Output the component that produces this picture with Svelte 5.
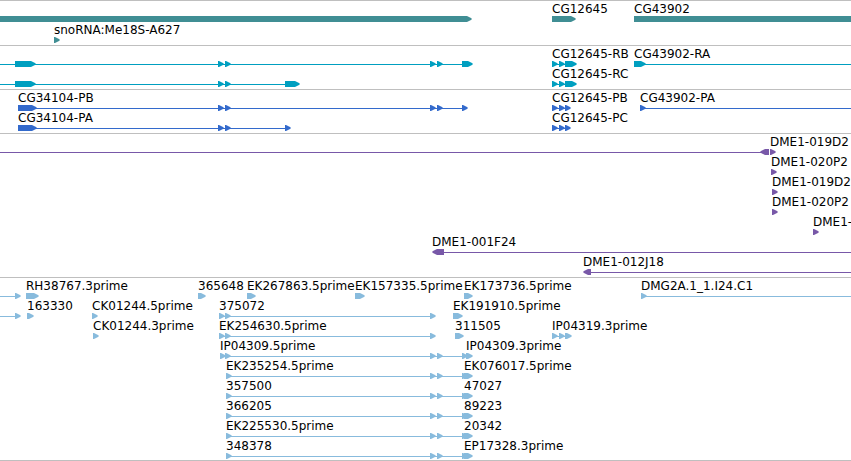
<script>
    // reads that run on past the right edge
    const END = 4000

    // spans: [start, end], dir is only set for the reverse strand
    const tracks = [
        {
            name: 'genes',
            rows: [
                [
                    { spans: [[-10, 472]] },
                    { label: 'CG12645', spans: [[552, 576]] },
                    { label: 'CG43902', spans: [[634, END]] },
                ],
                [
                    { label: 'snoRNA:Me18S-A627', spans: [[54, 60]] },
                ],
            ]
        },
        {
            name: 'transcripts',
            rows: [
                [
                    { line: [0, 470], spans: [[15, 36], [218, 224], [225, 231], [430, 436], [437, 443], [462, 473]] },
                    { label: 'CG12645-RB', line: [552, 570], spans: [[552, 558], [559, 565], [565, 577]] },
                    { label: 'CG43902-RA', line: [634, END], spans: [[634, 646]] },
                ],
                [
                    { line: [0, 298], spans: [[15, 36], [218, 224], [225, 231], [285, 300]] },
                    { label: 'CG12645-RC', line: [552, 570], spans: [[552, 558], [559, 565], [565, 577]] },
                ],
            ]
        },
        {
            name: 'proteins',
            rows: [
                [
                    { label: 'CG34104-PB', line: [18, 465], spans: [[18, 37], [218, 224], [225, 231], [430, 436], [437, 443], [462, 468]] },
                    { label: 'CG12645-PB', line: [552, 568], spans: [[552, 558], [559, 565], [565, 571]] },
                    { label: 'CG43902-PA', line: [640, END], spans: [[640, 646]] },
                ],
                [
                    { label: 'CG34104-PA', line: [18, 288], spans: [[18, 37], [218, 224], [225, 231], [285, 291]] },
                    { label: 'CG12645-PC', line: [552, 568], spans: [[552, 558], [559, 565], [565, 571]] },
                ],
            ]
        },
        {
            name: 'clones',
            rows: [
                [
                    { line: [0, 765], spans: [[760, 769]], dir: 'rev' },
                    { label: 'DME1-019D2', spans: [[770, 776]] },
                ],
                [{ label: 'DME1-020P2', spans: [[771, 777]] }],
                [{ label: 'DME1-019D2', spans: [[772, 778]] }],
                [{ label: 'DME1-020P2', spans: [[772, 778]] }],
                [{ label: 'DME1-', spans: [[813, 819]] }],
                [{ label: 'DME1-001F24', line: [436, END], spans: [[432, 444]], dir: 'rev' }],
                [{ label: 'DME1-012J18', line: [586, END], spans: [[583, 591]], dir: 'rev' }],
            ]
        },
        {
            name: 'ests',
            rows: [
                [
                    { line: [0, 18], spans: [[15, 21]] },
                    { label: 'RH38767.3prime', spans: [[26, 39]] },
                    { label: '365648', spans: [[198, 206]] },
                    { label: 'EK267863.5prime', spans: [[247, 256]] },
                    { label: 'EK157335.5prime', spans: [[355, 365]] },
                    { label: 'EK173736.5prime', spans: [[464, 473]] },
                    { label: 'DMG2A.1_1.I24.C1', line: [641, END], spans: [[641, 647]] },
                ],
                [
                    { line: [0, 18], spans: [[15, 21]] },
                    { label: '163330', spans: [[27, 34]] },
                    { label: 'CK01244.5prime', spans: [[92, 98]] },
                    { label: '375072', line: [219, 433], spans: [[219, 225], [225, 231], [430, 436]] },
                    { label: 'EK191910.5prime', spans: [[453, 463]] },
                ],
                [
                    { label: 'CK01244.3prime', spans: [[93, 99]] },
                    { label: 'EK254630.5prime', line: [219, 433], spans: [[219, 225], [225, 231], [430, 436]] },
                    { label: '311505', spans: [[455, 464]] },
                    { label: 'IP04319.3prime', line: [552, 568], spans: [[552, 558], [559, 565], [565, 572]] },
                ],
                [
                    { label: 'IP04309.5prime', line: [220, 465], spans: [[220, 226], [225, 231], [430, 436], [437, 443], [462, 468]] },
                    { label: 'IP04309.3prime', spans: [[466, 473]] },
                ],
                ...[
                    ['EK235254.5prime', 'EK076017.5prime'],
                    ['357500', '47027'],
                    ['366205', '89223'],
                    ['EK225530.5prime', '20342'],
                    ['348378', 'EP17328.3prime'],
                ].map(([left, right]) => [
                    { label: left, line: [226, 464], spans: [[226, 232], [430, 436], [437, 443], [462, 468]] },
                    { label: right, spans: [[464, 473]] },
                ]),
            ]
        },
    ]

    // block with a blunt pointed end, 6px high
    function arrow([start, end], dir) {
        if (dir === 'rev') {
            return `M${end} 14H${start + 5}L${start + 1} 16L${start} 17L${start + 1} 18L${start + 5} 20H${end}Z`
        }
        return `M${start} 14H${end - 5}L${end - 1} 16L${end} 17L${end - 1} 18L${end - 5} 20H${start}Z`
    }
</script>

<main>
    {#each tracks as track}
    <section class={`track ${track.name}`}>
        {#each track.rows as row}
        <svg class="row">
            {#each row as feature}
                {#if feature.line}
                <rect x={feature.line[0]} y="17" width={feature.line[1] - feature.line[0]} height="1" />
                {/if}
                {#each feature.spans as span}
                <path d={arrow(span, feature.dir)} />
                {/each}
                {#if feature.label}
                <text x={feature.spans[0][0]} y="11">{feature.label}</text>
                {/if}
            {/each}
        </svg>
        {/each}
    </section>
    {/each}
</main>

<style>
    :global(body) {
        margin: 0;
        background: #fff;
    }

    main {
        overflow: hidden;
        border-bottom: 1px solid #bfbfbf;
    }

    .track {
        border-top: 1px solid #bfbfbf;
        padding: 1px 0 2px;
    }
    .track:last-child {padding-bottom: 1px}

    .row {
        display: block;
        width: 100%;
        height: 20px;
    }
    .genes .row:first-child {height: 21px}

    text {
        font-family: "DejaVu Sans", sans-serif;
        font-size: 12px;
        fill: #000;
    }

    /******** TRACK COLOURS ********/
    .genes {fill: #408e94}
    .transcripts {fill: #009fc0}
    .proteins {fill: #336acc}
    .clones {fill: #7858a8}
    .ests {fill: #88bbdd}
</style>
